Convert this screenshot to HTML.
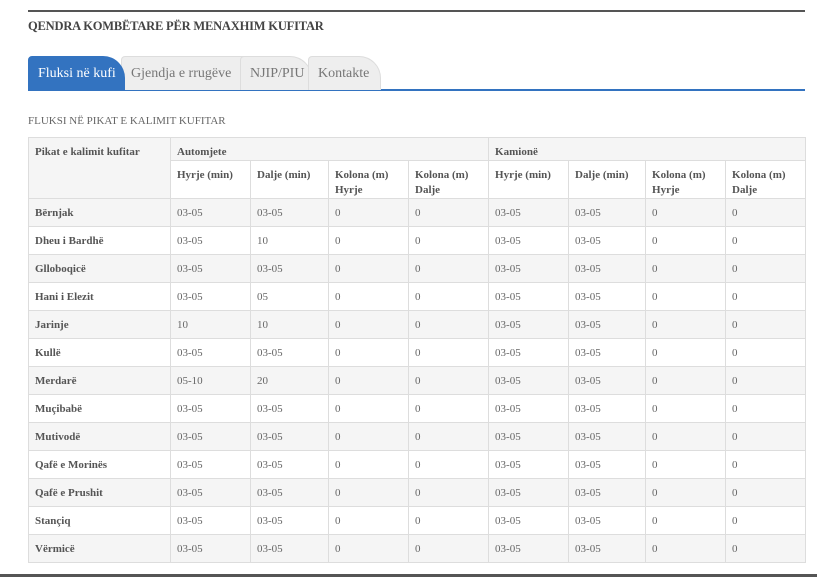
<!DOCTYPE html>
<html><head><meta charset="utf-8"><style>
body{margin:0;background:#fff;width:817px;height:577px;overflow:hidden;font-family:"Liberation Serif",serif;color:#555;position:relative}
.top{position:absolute;left:28px;top:10px;width:777px;height:2px;background:#555}
h1{position:absolute;left:28px;top:19px;margin:0;font-size:12.5px;font-weight:bold;color:#444;letter-spacing:-0.2px}
.tabs{position:absolute;left:28px;top:55px;width:777px;height:34px;border-bottom:2px solid #3373c0}
.tab{position:absolute;top:1px;height:34px;background:#eee;border:1px solid #ddd;border-bottom:none;border-radius:4px 22px 0 0;font-size:14px;line-height:34px;color:#777;padding-left:9px;box-sizing:border-box}
.tab.a{background:#3373c0;color:#fff;border-color:#3373c0;z-index:2}
.cap{position:absolute;left:28px;top:115px;font-size:11px;color:#666}
table{position:absolute;left:28px;top:137px;border-collapse:collapse;width:777px;table-layout:fixed;font-size:11px}
td,th{border:1px solid #ddd;padding:0 6px;text-align:left;vertical-align:middle;height:27px;color:#666;font-weight:normal}
th{font-weight:bold;color:#555;vertical-align:top;padding-top:7px;line-height:15px}
tr.g td{background:#f5f5f5}
td:first-child{font-weight:bold;color:#555}
thead th{background:#f5f5f5}
.bot{position:absolute;left:0;top:574px;width:817px;height:3px;background:#555}
</style></head><body>
<div class="top"></div>
<h1>QENDRA KOMBËTARE PËR MENAXHIM KUFITAR</h1>
<div class="tabs">
<div class="tab a" style="left:0;width:97px">Fluksi në kufi</div>
<div class="tab" style="left:93px;width:152px">Gjendja e rrugëve</div>
<div class="tab" style="left:212px;width:72px">NJIP/PIU</div>
<div class="tab" style="left:280px;width:73px">Kontakte</div>
</div>
<div class="cap">FLUKSI NË PIKAT E KALIMIT KUFITAR</div>
<table>
<colgroup><col style="width:142px"><col style="width:80px"><col style="width:78px"><col style="width:80px"><col style="width:80px"><col style="width:80px"><col style="width:77px"><col style="width:80px"><col style="width:80px"></colgroup>
<thead>
<tr><th rowspan="2">Pikat e kalimit kufitar</th><th colspan="4" style="height:13px">Automjete</th><th colspan="4" style="height:13px">Kamionë</th></tr>
<tr><th style="height:28px;background:#fff">Hyrje (min)</th><th style="background:#fff">Dalje (min)</th><th style="background:#fff">Kolona (m) Hyrje</th><th style="background:#fff">Kolona (m) Dalje</th><th style="background:#fff">Hyrje (min)</th><th style="background:#fff">Dalje (min)</th><th style="background:#fff">Kolona (m) Hyrje</th><th style="background:#fff">Kolona (m) Dalje</th></tr>
</thead>
<tbody>
<tr class="g"><td>Bërnjak</td><td>03-05</td><td>03-05</td><td>0</td><td>0</td><td>03-05</td><td>03-05</td><td>0</td><td>0</td></tr>
<tr><td>Dheu i Bardhë</td><td>03-05</td><td>10</td><td>0</td><td>0</td><td>03-05</td><td>03-05</td><td>0</td><td>0</td></tr>
<tr class="g"><td>Glloboqicë</td><td>03-05</td><td>03-05</td><td>0</td><td>0</td><td>03-05</td><td>03-05</td><td>0</td><td>0</td></tr>
<tr><td>Hani i Elezit</td><td>03-05</td><td>05</td><td>0</td><td>0</td><td>03-05</td><td>03-05</td><td>0</td><td>0</td></tr>
<tr class="g"><td>Jarinje</td><td>10</td><td>10</td><td>0</td><td>0</td><td>03-05</td><td>03-05</td><td>0</td><td>0</td></tr>
<tr><td>Kullë</td><td>03-05</td><td>03-05</td><td>0</td><td>0</td><td>03-05</td><td>03-05</td><td>0</td><td>0</td></tr>
<tr class="g"><td>Merdarë</td><td>05-10</td><td>20</td><td>0</td><td>0</td><td>03-05</td><td>03-05</td><td>0</td><td>0</td></tr>
<tr><td>Muçibabë</td><td>03-05</td><td>03-05</td><td>0</td><td>0</td><td>03-05</td><td>03-05</td><td>0</td><td>0</td></tr>
<tr class="g"><td>Mutivodë</td><td>03-05</td><td>03-05</td><td>0</td><td>0</td><td>03-05</td><td>03-05</td><td>0</td><td>0</td></tr>
<tr><td>Qafë e Morinës</td><td>03-05</td><td>03-05</td><td>0</td><td>0</td><td>03-05</td><td>03-05</td><td>0</td><td>0</td></tr>
<tr class="g"><td>Qafë e Prushit</td><td>03-05</td><td>03-05</td><td>0</td><td>0</td><td>03-05</td><td>03-05</td><td>0</td><td>0</td></tr>
<tr><td>Stançiq</td><td>03-05</td><td>03-05</td><td>0</td><td>0</td><td>03-05</td><td>03-05</td><td>0</td><td>0</td></tr>
<tr class="g"><td>Vërmicë</td><td>03-05</td><td>03-05</td><td>0</td><td>0</td><td>03-05</td><td>03-05</td><td>0</td><td>0</td></tr>
</tbody></table>
<div class="bot"></div>
</body></html>
